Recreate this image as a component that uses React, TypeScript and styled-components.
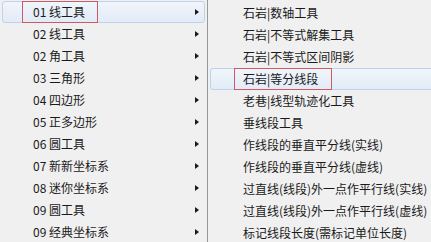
import * as React from 'react'
import styled, { createGlobalStyle } from 'styled-components'

const GlobalStyle = createGlobalStyle`
  html, body {
    margin: 0;
    padding: 0;
    background: #f0f0f0;
  }
  body {
    font-family: "Noto Sans CJK SC", "Microsoft YaHei", sans-serif;
    font-size: 12px;
    color: #1a1a1a;
  }
`

const SScreen = styled.div`
  width: 431px;
  height: 242px;
  display: flex;
  overflow: hidden;
  background: #f0f0f0;
`

const SMenu = styled.div<{ $side: 'left' | 'right' }>`
  flex: none;
  display: flex;
  flex-direction: column;
  box-sizing: border-box;
  width: ${({ $side }) => ($side === 'left' ? '208px' : '240px')};
  padding: ${({ $side }) => ($side === 'left' ? '1px 2px 0 2px' : '2px 0 0 2px')};
  border-right: ${({ $side }) => ($side === 'left' ? '1px solid #979797' : 'none')};
`

const SItem = styled.div<{ $active?: boolean; $indent: number }>`
  height: 22px;
  flex: none;
  box-sizing: border-box;
  display: flex;
  align-items: center;
  padding-left: ${({ $indent }) => $indent}px;
  border: 1px solid ${({ $active }) => ($active ? '#bcd3ee' : 'transparent')};
  border-radius: 3px;
  background: ${({ $active }) =>
    $active ? 'linear-gradient(#f1f5fb, #e2ebf7)' : 'transparent'};
  white-space: nowrap;
`

const SLabel = styled.span<{ $marked?: boolean; $padL: number; $padR: number }>`
  display: inline-flex;
  align-items: center;
  height: 22px;
  box-sizing: border-box;
  padding: 0 ${({ $padR }) => $padR}px 0 ${({ $padL }) => $padL}px;
  border: 1px solid ${({ $marked }) => ($marked ? '#cf5a66' : 'transparent')};
  line-height: 20px;
`

const SArrow = styled.span`
  margin-left: auto;
  margin-right: 5px;
  width: 0;
  height: 0;
  border-top: 3.5px solid transparent;
  border-bottom: 3.5px solid transparent;
  border-left: 4px solid #1a1a1a;
`

const leftItems = [
  '01 线工具',
  '02 线工具',
  '02 角工具',
  '03 三角形',
  '04 四边形',
  '05 正多边形',
  '06 圆工具',
  '07 新新坐标系',
  '08 迷你坐标系',
  '09 圆工具',
  '09 经典坐标系'
]

const rightItems = [
  '石岩|数轴工具',
  '石岩|不等式解集工具',
  '石岩|不等式区间阴影',
  '石岩|等分线段',
  '老巷|线型轨迹化工具',
  '垂线段工具',
  '作线段的垂直平分线(实线)',
  '作线段的垂直平分线(虚线)',
  '过直线(线段)外一点作平行线(实线)',
  '过直线(线段)外一点作平行线(虚线)',
  '标记线段长度(需标记单位长度)'
]

const App = () => {
  return (
    <SScreen>
      <GlobalStyle />
      <SMenu $side="left">
        {leftItems.map((label, i) => (
          <SItem key={i} $active={i === 0} $indent={19}>
            <SLabel $marked={i === 0} $padL={10} $padR={12}>{label}</SLabel>
            <SArrow />
          </SItem>
        ))}
      </SMenu>
      <SMenu $side="right">
        {rightItems.map((label, i) => (
          <SItem key={i} $active={i === 3} $indent={23}>
            <SLabel $marked={i === 3} $padL={8} $padR={13}>{label}</SLabel>
          </SItem>
        ))}
      </SMenu>
    </SScreen>
  )
}

export default App
